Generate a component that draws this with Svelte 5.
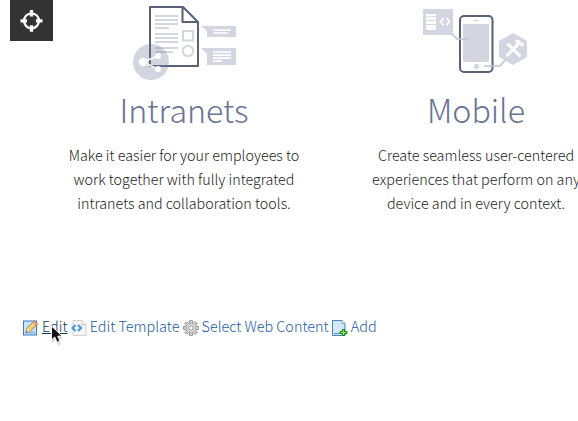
<script>
  const features = [
    {
      title: 'Intranets',
      icon: 'document',
      lines: ['Make it easier for your employees to', 'work together with fully integrated', 'intranets and collaboration tools.']
    },
    {
      title: 'Mobile',
      icon: 'phone',
      lines: ['Create seamless user-centered', 'experiences that perform on any', 'device and in every context.']
    }
  ];
  const actions = [
    { label: 'Edit', icon: 'edit', active: true },
    { label: 'Edit Template', icon: 'template' },
    { label: 'Select Web Content', icon: 'gear' },
    { label: 'Add', icon: 'add' }
  ];
  const teeth = [0, 45, 90, 135, 180, 225, 270, 315];
</script>

<div class="page">
  <button class="target" aria-label="Controls">
    <svg width="43" height="41" viewBox="0 0 43 41">
      <circle cx="21.5" cy="20.8" r="7.5" fill="none" stroke="#fff" stroke-width="2.2" />
      <path d="M21.5 10v6.500M21.5 25.200v6.500M10.500 20.800h6.500M26 20.800h6.500" stroke="#fff" stroke-width="3.300" />
    </svg>
  </button>

  <main class="features">
    {#each features as f}
      <section class="feature">
        {#if f.icon === 'document'}
          <svg class="art" width="292" height="86" viewBox="38 0 292 86">
            <path d="M150 7h33l15 15v44h-48z" fill="#fff" />
            <path d="M155 16h23M155 20h23M155 24h23M155 28h14M155 34h23M155 38h23M155 42h23M155 48h23M155 52h18" stroke="#d3d6e0" stroke-width="1.800" />
            <rect x="183" y="31" width="10" height="9.500" fill="none" stroke="#d3d6e0" stroke-width="2" />
            <circle cx="188" cy="51" r="5.200" fill="none" stroke="#d3d6e0" stroke-width="2" />
            <path d="M182.500 7v15H198M150 7h33l15 15v44h-48z" fill="none" stroke="#596078" stroke-width="2" stroke-linejoin="round" />
            <circle cx="151" cy="62" r="18" fill="#6e7899" opacity=".3" />
            <path d="M201 26h35v11h-29v-6zM201 48h35v17h-29v-11z" fill="#d3d6e0" />
            <path d="M213 30h18M213 33h15M213 52h18M213 55.200h18M213 58.200h18M213 61.200h9" stroke="#fff" stroke-width="1.700" />
            <path d="M158 56l-15 6 15 7" fill="none" stroke="#fff" stroke-width="1.600" />
            <circle cx="143" cy="62" r="4.200" fill="#fff" />
            <circle cx="158" cy="56" r="3" fill="#fff" />
            <circle cx="158" cy="69" r="3" fill="#fff" />
          </svg>
        {:else}
          <svg class="art" width="292" height="86" viewBox="330 0 292 86">
            <path d="M423 9h30v26h-30z" fill="#d3d6e0" />
            <path d="M426 14h10v16h-10z" fill="#fff" />
            <path d="M426 16.800h10M426 20.600h10M426 24.500h10" stroke="#d3d6e0" stroke-width="1" />
            <path d="M443.500 18l-3 3.700 3 3.700M446.500 18l3 3.700-3 3.700" fill="none" stroke="#fff" stroke-width="1.700" />
            <rect x="460" y="16" width="32.500" height="56" rx="4" fill="#fff" stroke="#596078" stroke-width="2" />
            <path d="M463 24h26v38h-26z" fill="#d3d6e0" />
            <path d="M473.500 20.500h5" stroke="#d3d6e0" stroke-width="1.400" />
            <circle cx="476.500" cy="66.500" r="2.700" fill="#d3d6e0" />
            <path d="M452 34l5 5h11M484 66h16l7-8" fill="none" stroke="#bfc3d1" stroke-width="1.600" />
            <path d="M513 33l14 8v16l-14 8-14-8V41z" fill="#d3d6e0" />
            <path d="M507.500 43.500l13 13M518 44.500L506.500 56" stroke="#fff" stroke-width="3" />
            <path d="M514.500 40.500q5-2 7 2l2 1v3h-2l-2-2-2 2-2-2 1-2z" fill="#fff" />
          </svg>
        {/if}
        <h2>{f.title}</h2>
        <p>{#each f.lines as line}<span>{line}</span>{/each}</p>
      </section>
    {/each}
  </main>

  <nav class="actions">
    {#each actions as a}
      <a href="#{a.icon}" class={a.icon} class:active={a.active}>
        <svg width="16" height="16" viewBox="0 0 16 16">
          {#if a.icon === 'edit'}
            <rect x=".5" y="1" width="13" height="14" fill="#c9e3fb" stroke="#397abb" />
            <path d="M2 12.500h10" stroke="#8bbbe3" stroke-width="2" />
            <path d="M3 12.500l1-4.500 7.500-7 3 3L7 11.500z" fill="#f5c966" stroke="#9b7332" stroke-width=".8" />
            <path d="M10 2.500l1.700-1.800 3 3L13 5.400z" fill="#e9a58c" stroke="#a46c56" stroke-width=".5" />
            <path d="M3 12.500l1-4 3 3z" fill="#f7e4c1" /><path d="M5 9l6-5.500" stroke="#fff0aa" />
            <path d="M3 12.500l.5-1.700 1.300 1.200z" fill="#333" />
          {:else if a.icon === 'template'}
            <path d="M2 .5h9l4 4v11H2z" fill="#f7f7f7" stroke="#d0d0d0" />
            <path d="M11 .5v4h4" fill="#fff" stroke="#c8c8c8" />
            <path d="M4.500 5L1.500 8l3 3M7 5l3 3-3 3" fill="none" stroke="#459bdc" stroke-width="2.200" />
          {:else if a.icon === 'gear'}
            {#each teeth as t}
              <rect x="6.500" y=".4" width="3" height="4" rx=".5" fill="#d2d2d2" stroke="#858585" stroke-width=".8" transform="rotate({t} 8 8)" />
            {/each}
            <circle cx="8" cy="8" r="5" fill="#d6d6d6" stroke="#999" stroke-width=".6" />
            <circle cx="8" cy="8" r="4.200" fill="#d6d6d6" />
            <circle cx="8" cy="8" r="2.200" fill="#fff" stroke="#858585" stroke-width=".8" />
          {:else}
            <path d="M.5.5h9.500l3 3v12H.5z" fill="#d3e8fb" stroke="#4b82b9" />
            <path d="M10 .5v3h3" fill="#fff" stroke="#79a6d0" />
            <path d="M2 13.500h6" stroke="#5b91c4" />
            <path d="M10.500 9.500h2v2h2.500v2h-2.500v2h-2v-2h-2.500v-2h2.500z" fill="#8df04d" stroke="#187d15" />
          {/if}
        </svg>
        <span>{a.label}</span>
      </a>
    {/each}
  </nav>

  <svg class="cursor" width="18" height="24" viewBox="0 0 18 24">
    <path d="M2 2v15l3.500-3 2.500 5.500 3-1.300-2.500-5.200H13z" transform="translate(0 1)" fill="#000" opacity=".15" />
    <path d="M1.500 1v14l3.200-3 2.400 5.300 2.900-1.300-2.300-4.800h4.500z" fill="#111" stroke="#fff" stroke-width="1" />
  </svg>
</div>

<style>
  :global(body) { margin: 0; background: #fff; }
  .page {
    position: relative;
    width: 578px;
    height: 421px;
    overflow: hidden;
    background: #fff;
    font-family: "Source Sans Pro", "Noto Sans CJK SC", "Open Sans", sans-serif;
    font-weight: 300;
  }
  .target {
    position: absolute;
    left: 10px;
    top: 0;
    width: 43px;
    height: 41px;
    padding: 0;
    border: 0;
    background: #333;
  }
  svg { display: block; flex: none; }
  .features { display: flex; padding-left: 38px; height: 316px; box-sizing: border-box; }
  .feature { flex: none; width: 292px; text-align: center; }
  h2 {
    margin: 0;
    height: 57px;
    font-size: 32.2px;
    line-height: 46px;
    font-weight: 300;
    color: #6b7394;
  }
  p { margin: 0; font-size: 14.32px; line-height: 24px; color: #222; }
  p span { display: block; white-space: nowrap; }
  .actions { display: flex; padding-left: 23px; gap: 3.2px; }
  .actions a {
    display: flex;
    align-items: center;
    gap: 3px;
    height: 20px;
    color: #1c5ba3;
    font-size: 14.38px;
    line-height: 20px;
    text-decoration: none;
    white-space: nowrap;
  }
  .actions svg { margin-top: 3px; }
  .actions .active { color: #10375c; }
  .active span { text-decoration: underline; }
  .cursor { position: absolute; left: 50px; top: 325px; }
</style>
